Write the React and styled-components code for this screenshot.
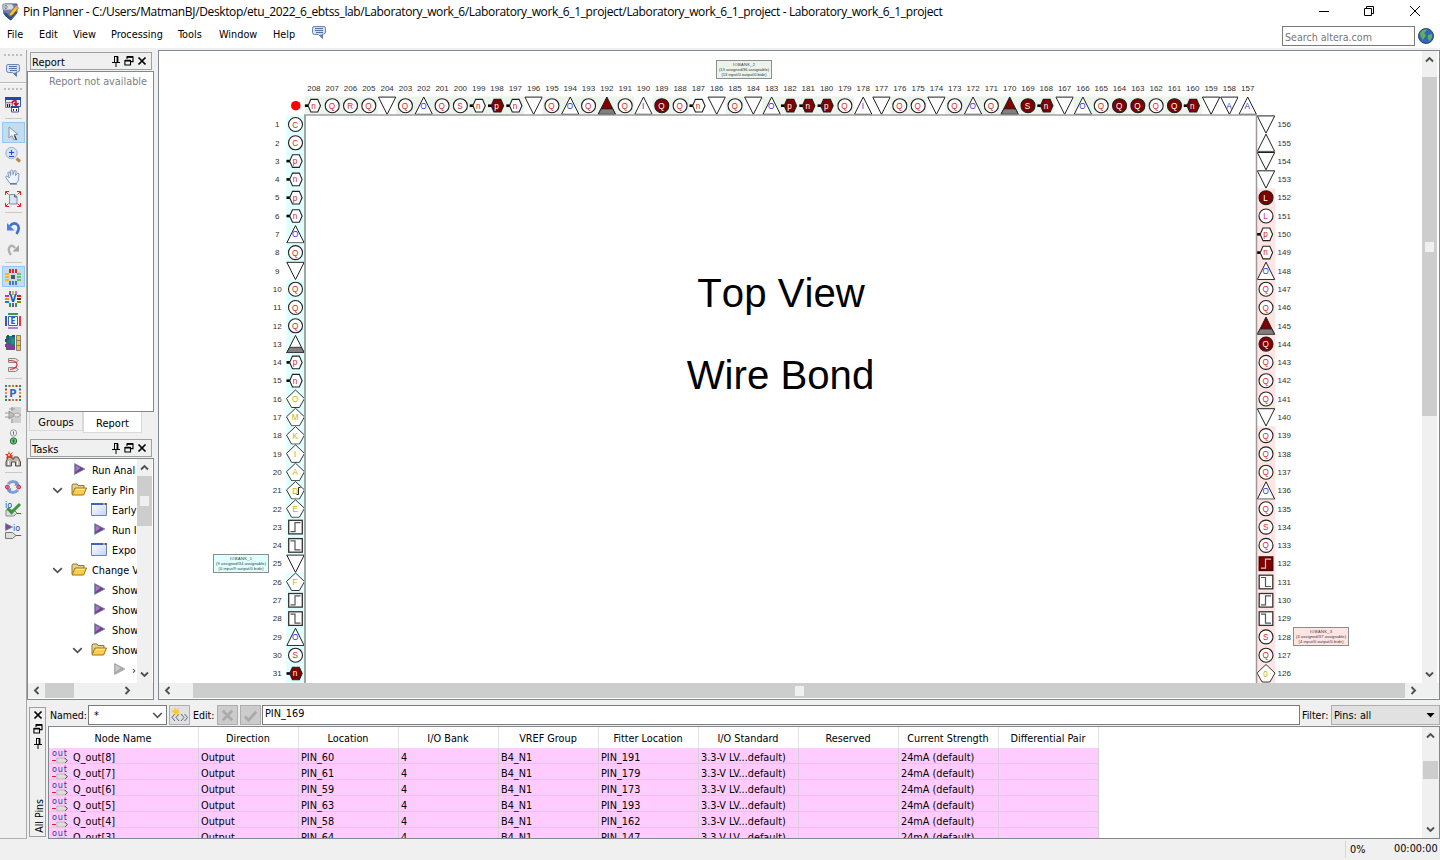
import React from "react";
import styled, { createGlobalStyle, css } from "styled-components";

const Global = createGlobalStyle`
  *{box-sizing:border-box}
  html,body{margin:0;padding:0;overflow:hidden}
  body{font-family:"DejaVu Sans Condensed","DejaVu Sans",sans-serif;font-stretch:condensed;font-size:10.8px;color:#000;background:#f0f0f0}
`;

/* ---------- window frame ---------- */
const Window = styled.div`width:1440px;height:860px;display:flex;flex-direction:column;background:#f0f0f0;overflow:hidden;`;
const TitleBar = styled.header`height:24px;flex:none;display:flex;align-items:center;background:#fff;padding-left:2px;`;
const TitleText = styled.div`font:12px/16px "Open Sans","Noto Sans",sans-serif;margin-left:4px;letter-spacing:-0.36px;white-space:nowrap;flex:1;`;
const WindowButtons = styled.div`display:flex;gap:30px;padding-right:17px;margin-top:-3px;`;
const MenuBar = styled.nav`height:26px;flex:none;display:flex;align-items:flex-start;background:linear-gradient(#fff 0 24px,#f0f0f0 24px);padding-left:7px;`;
const MenuItem = styled.div`width:${p => p.$w}px;line-height:22px;white-space:nowrap;`;
const MenuIcon = styled.div`padding-top:1px;line-height:0;`;
const SearchBox = styled.div`width:133px;height:20px;margin:2px 3px 0 auto;border:1px solid #7a7a7a;padding-left:2px;line-height:21px;color:#757575;font-size:10.6px;background:#fff;white-space:nowrap;`;
const GlobeSlot = styled.div`width:22px;padding:3px 0 0 0;`;
const Workspace = styled.main`height:788px;flex:none;display:flex;`;

/* ---------- left tool strip ---------- */
const ToolStrip = styled.aside`width:27px;height:789px;flex:none;display:flex;flex-direction:column;border-right:1px solid #a9a9a9;border-bottom:1px solid #b0b0b0;background:#f0f0f0;z-index:1;`;
const Grip = styled.div`height:10px;flex:none;margin-left:4px;width:18px;background:repeating-linear-gradient(90deg,#bdbdbd 0 2px,transparent 2px 4px) 0 4px/18px 2px no-repeat;`;
const StripLine = styled.div`height:2px;flex:none;background:#bcbcbc;border-bottom:1px solid #fafafa;`;
const StripSep = styled.div`height:6px;flex:none;margin:0 4px;background:linear-gradient(#c8c8c8,#c8c8c8) 1px 2px/17px 1px no-repeat;`;
const Tool = styled.div`
  height:21px;width:23px;margin:0 0 1px 2px;flex:none;padding:2px 0 0 2px;line-height:0;border:1px solid transparent;
  ${p => p.$on && css`background:#c2ddf2;border-color:#90c8f6;`}
`;

/* ---------- docks ---------- */
const Right = styled.div`flex:1;min-width:0;display:flex;flex-direction:column;`;
const Upper = styled.div`height:650px;flex:none;display:flex;`;
const Dock = styled.div`width:131px;flex:none;display:flex;flex-direction:column;`;
const DockHeader = styled.div`height:18px;width:122px;flex:none;margin:${p => p.$m};border:1px solid #a0a0a0;display:flex;align-items:center;padding:0 4px 0 1px;gap:3px;`;
const DockTitle = styled.div`flex:1;font-size:11px;line-height:18px;padding-top:3px;`;
const ReportBox = styled.div`height:341px;width:127px;flex:none;background:#fff;border:1px solid #828790;text-align:right;padding:2px 6px 0 0;color:#808080;line-height:16px;white-space:nowrap;`;
const Tabs = styled.div`display:flex;height:22px;flex:none;padding-left:2px;align-items:flex-start;`;
const Tab = styled.div`width:${p => p.$w}px;height:${p => p.$on ? 21 : 19}px;line-height:${p => p.$on ? 23 : 21}px;text-align:center;border:1px solid #d9d9d9;border-top:0;background:${p => p.$on ? "#fff" : "#f0f0f0"};font-size:11px;`;
const TaskBox = styled.div`height:242px;width:127px;flex:none;background:#fff;border:1px solid #828790;display:flex;flex-direction:column;`;
const TaskBody = styled.div`height:224px;flex:none;display:flex;`;
const TaskRows = styled.div`width:109px;flex:none;overflow:hidden;padding-top:1px;`;
const TaskRow = styled.div`height:20px;display:flex;align-items:center;padding-left:${p => p.$in}px;white-space:nowrap;`;
const Chevron = styled.div`width:20px;flex:none;padding-left:1px;line-height:0;`;
const TaskIcon = styled.div`width:${p => p.$w}px;flex:none;line-height:0;margin-top:-2px;`;
const TaskLabel = styled.span`line-height:18px;padding-top:2px;`;

/* ---------- scrollbars ---------- */
const VBar = styled.div`width:${p => p.$w || 15}px;flex:none;background:#f0f0f0;display:flex;flex-direction:column;align-items:center;height:100%;`;
const HBar = styled.div`height:15px;flex:none;background:#f0f0f0;display:flex;align-items:center;`;
const Arrow = styled.div`width:17px;height:17px;flex:none;display:flex;align-items:center;justify-content:center;`;
const Thumb = styled.div`flex:none;background:#cdcdcd;display:flex;align-items:center;justify-content:center;width:${p => p.$w}px;height:${p => p.$h}px;margin:${p => p.$m || 0};`;
const ThumbMark = styled.i`width:9px;height:10px;background:#f0f0f0;`;
const Fill = styled.div`flex:1;`;

/* ---------- package view ---------- */
const PackagePanel = styled.section`flex:1;min-width:0;height:650px;border:1px solid #828790;background:#fff;display:flex;flex-direction:column;`;
const PackageBody = styled.div`display:flex;height:632px;flex:none;`;
const PackageSvg = styled.svg`display:block;flex:none;background:#fff;`;
const PackageTitle = styled.text`font-size:40.2px;font-kerning:none;text-anchor:middle;`;

/* ---------- all pins ---------- */
const Lower = styled.section`height:139px;flex:none;display:flex;padding-top:5px;`;
const PinsHandle = styled.div`width:17px;height:130px;flex:none;margin:2px 2px 0 2px;border:1px solid #a0a0a0;display:flex;flex-direction:column;align-items:center;padding-top:2px;gap:4px;`;
const VerticalLabel = styled.div`writing-mode:vertical-rl;transform:rotate(180deg);margin-top:auto;margin-bottom:3px;margin-left:2px;line-height:14px;font-size:10.5px;white-space:nowrap;`;
const PinsMain = styled.div`flex:1;min-width:0;display:flex;flex-direction:column;`;
const FilterRow = styled.div`height:20px;flex:none;display:flex;align-items:center;`;
const FieldLabel = styled.div`width:${p => p.$w}px;padding-left:${p => p.$pl ?? 2}px;flex:none;font-size:10.5px;white-space:nowrap;`;
const Combo = styled.div`width:79px;height:20px;flex:none;border:1px solid #7a7a7a;background:#fff;display:flex;align-items:center;justify-content:space-between;padding:0 3px 0 5px;margin-right:2px;`;
const SmallButton = styled.div`width:21px;height:20px;flex:none;border:1px solid #adadad;background:${p => p.$off ? "#ccc" : "#e1e1e1"};display:flex;align-items:center;justify-content:center;margin-right:${p => p.$mr || 0}px;`;
const PinInput = styled.div`flex:1;height:20px;border:1px solid #7a7a7a;background:#fff;line-height:15px;padding-left:2px;`;
const FilterCombo = styled.div`width:109px;height:20px;flex:none;border:1px solid #adadad;background:#e1e1e1;display:flex;align-items:center;justify-content:space-between;padding:0 4px 0 2px;`;
const TableBox = styled.div`height:113px;margin-top:1px;flex:none;border:1px solid #828790;background:#fff;display:flex;`;
const TableView = styled.div`flex:1;overflow:hidden;`;
const HeadRow = styled.div`display:flex;height:21px;`;
const HeadCell = styled.div`width:${p => p.$w}px;height:21px;border-right:1px solid #e2e2e2;text-align:center;line-height:24px;white-space:nowrap;padding-right:1px;`;
const BodyRow = styled.div`display:flex;height:16px;`;
const BodyCell = styled.div`width:${p => p.$w}px;height:16px;border-right:1px solid #d8d0d8;border-bottom:1px solid #d8d0d8;background:#fcf;padding-left:2px;line-height:20px;white-space:nowrap;display:flex;`;
const NodeIcon = styled.span`width:22px;padding-left:1px;flex:none;line-height:0;`;
const StatusBar = styled.footer`height:22px;flex:none;display:flex;align-items:center;justify-content:flex-end;`;
const Percent = styled.div`width:49px;height:17px;border-left:1px solid #d7d7d7;padding-left:4px;line-height:18px;`;
const Clock = styled.div`width:46px;line-height:18px;white-space:nowrap;`;

/* ---------- small glyphs ---------- */
const Chev = ({ d = "down", c = "#505050", s = 9, w = 1.9 }) => {
  const r = { down: 0, up: 180, left: 90, right: -90 }[d];
  return <svg width={s} height={s} viewBox="0 0 9 9"><path d="M1 2.5 4.5 6 8 2.5" transform={`rotate(${r} 4.5 4.5)`} fill="none" stroke={c} strokeWidth={w} /></svg>;
};
const PinGlyph = () => <svg width="10" height="11" viewBox="0 0 10 11"><path d="M3 .5h4M3.500 .5v6M1 6.500h8M5 7v4" fill="none" stroke="#000" /><path d="M6.500 .5v6" stroke="#000" strokeWidth="1.800" /></svg>;
const FloatGlyph = () => <svg width="10" height="10" viewBox="0 0 10 10"><path d="M3 3V.9h6v4.7H7M.9 4.5h5.6V9H.9z" fill="none" stroke="#000" strokeWidth="1.1" /><path d="M3 .9h6M1 4.7h5.5" stroke="#000" strokeWidth="1.8" /></svg>;
const CloseGlyph = () => <svg width="10" height="10" viewBox="0 0 10 10"><path d="m1.5 1.5 7 7m0-7-7 7" stroke="#000" strokeWidth="1.7" /></svg>;
const Ico = ({ children, w = 16, h = 16, v = "0 0 16 16" }) => <svg width={w} height={h} viewBox={v}>{children}</svg>;
const ChatIcon = () => <Ico><path d="M3 1.500h10q1.500 0 1.500 2v3.500q0 2-2 2H11.500v4.500L7.500 9.500H3.500Q1.500 9.500 1.500 7.500V3.500q0-2 1.500-2z" fill="#d3e0f5" stroke="#6a87b4" /><path d="M4 3.500h8M4 5.500h8M5 7.500h7" stroke="#5573a0" /><path d="m8 10 3.500 3.500V9.500" fill="#5d7fae" /></Ico>;
const Play = ({ gray }) => <svg width="12" height="12" viewBox="0 0 12 12"><path d="M.5 11.500V.5L11 6z" fill={gray ? "#aaa" : "#6e3f91"} stroke={gray ? "#a5a5a5" : "#8296ac"} strokeWidth=".8" /><path d="M1.500 9V2l5 3z" fill={gray ? "#ccc" : "#a57abd"} /></svg>;
const Folder = () => <svg width="16" height="13" viewBox="0 0 16 13"><path d="M1 11V2l1-1h4l1 1.500h6V5" fill="#e4d493" stroke="#8a7638" /><path d="m1 12 3-7h11.500L12.600 12z" fill="#ffcc4d" stroke="#9a7020" /><path d="M5 6.300h8.800" stroke="#fff0a0" /></svg>;
const Sheet = () => <svg width="16" height="13" viewBox="0 0 16 13"><defs><linearGradient id="sheet" x1="0" y1="0" x2="1" y2="1"><stop offset="0" stopColor="#fff" /><stop offset="1" stopColor="#c3d1f5" /></linearGradient></defs><path d="M.5.5h15v12H.5z" fill="url(#sheet)" stroke="#6a83b5" /><path d="M0 1h16" stroke="#3768c8" strokeWidth="2" /><path d="M12 1h2" stroke="#f28a25" strokeWidth="2" /></svg>;
const OutIcon = () => <svg width="17" height="15" viewBox="0 0 17 15"><text x="0" y="8" fontSize="9" textLength="15" fill="#1b3f9c" fontFamily="DejaVu Sans,sans-serif">out</text><path d="M0 12.500h4" stroke="#e22" /><path d="M5 10h7l3.500 2.500L13 15H5z" fill="#ddd" stroke="#aaa" strokeWidth=".8" /><path d="m12.500 10 3 2.500-2.500 2.500" fill="none" stroke="#555" /></svg>;

const bars = (top, right, bottom, left) => <g shapeRendering="crispEdges">
  {[4, 7, 10].map((x, i) => <rect key={"t" + i} x={x} y="0" width="2" height="4" fill={top[i % top.length]} />)}
  {[4, 7, 10].map((x, i) => <rect key={"b" + i} x={x} y="12" width="2" height="4" fill={bottom[i % bottom.length]} />)}
  {[4, 7, 10].map((y, i) => <rect key={"l" + i} x="0" y={y} width="4" height="2" fill={left[i % left.length]} />)}
  {[4, 7, 10].map((y, i) => <rect key={"r" + i} x="12" y={y} width="4" height="2" fill={right[i % right.length]} />)}
</g>;
const letter = (t, c, s = 9, y = 11.3) => <text x="8" y={y} textAnchor="middle" fontSize={s} fontWeight="bold" fill={c} fontFamily="DejaVu Sans,sans-serif">{t}</text>;
const dots = ["#1f8f3a", "#d04a21", "#6aa81e", "#e02020", "#2a9b36"];
const dotsSide = ["#168c96", "#8a5a20", "#e39b1c", "#3658bd", "#1f8f3a"];

const toolIcons = {
  windows: <Ico><path d="M.5.5h15v9H.5z" fill="#e9eef8" stroke="#2f55a8" /><path d="M0 1.500h16" stroke="#1f4ba8" strokeWidth="3" /><path d="M.5 5.500h7v5h-7z" fill="#ccc" stroke="#888" /><path d="M6.500 9.500h7v5.500h-7z" fill="#fff" stroke="#44579b" /><path d="M6 10h8" stroke="#234a9d" strokeWidth="2" /><path d="M2.500 7v3m2-3v3M8.500 12v2m3-2v2" stroke="#222" /><path d="M7 6q1-3 4-2v3m-2-1 2 2.500L13.500 6" fill="none" stroke="#c2003c" strokeWidth="1.500" /></Ico>,
  pointer: <Ico><path d="M4 2v11l3-2.500 2 4.500 2-1-2-4.500h4z" fill="#f4f8fe" stroke="#8292a8" /><path d="m9.500 10.500 2 4.500" stroke="#27364c" strokeWidth="1.200" /></Ico>,
  zoom: <Ico><circle cx="6.500" cy="6" r="5.700" fill="#cfe2fa" stroke="#9fb2c4" /><path d="m11.500 11.500 3.500 3" stroke="#bc8345" strokeWidth="3" /><path d="M4 5.500h5M6.500 3v5M4 9.500h5" stroke="#2250b5" strokeWidth="1.100" /></Ico>,
  hand: <Ico><path d="M5 14.500 .8 8.500q-.3-2 1.500-1.500l2 2-1.500-5q.3-1.700 1.800-.7l1 3.200V1.700q1.200-1.700 2.200 0l.2 4 1.200-3.900q1.900-1 1.900.8l-.6 4 1.900-2.300q2-.3 1.500 1.600L13.200 12l-2 2.500z" fill="#edf3ff" stroke="#7f98bd" /><path d="M5 15h7" stroke="#435f8c" /></Ico>,
  fit: <Ico><path d="M4.500 3.500h5l2.500 2v7.500H4.500z" fill="#dbe4f1" stroke="#7f90a8" /><path d="M9.500 3.500V6H12" fill="#8fa0b8" stroke="#526784" /><path d="M.5 4V.5H4M12 .5h3.500V4M.5 12v3.500H4m8 0h3.500V12M1 1l2.500 2.500M15 1l-2.500 2.500M1 15l2.500-2.500m11.500 2.500-2.500-2.500" fill="none" stroke="#e42020" /></Ico>,
  undo: <Ico><path d="M5 7q3-4 6.500-2 4.500 3 0 10" fill="none" stroke="#3b71d5" strokeWidth="2.600" /><path d="M2 4v7.500h7.500z" fill="#4a80df" /></Ico>,
  redo: <Ico><path d="M10 7Q7.500 3.500 5 5.500q-3 3.500 1 8.500" fill="none" stroke="#b0b0b0" strokeWidth="2.400" /><path d="M14 4v6.500H7.500z" fill="#a5a5a5" /></Ico>,
  chip: <Ico>{bars(["#ed2424"], ["#6cc25f"], ["#477ac6"], ["#ffb516"])}<path d="M6 6h4v4H6z" fill="#555" /></Ico>,
  vref: <Ico>{bars(["#8c57b3", "#a1d32d", "#dd6dd6"], ["#e02020", "#702020", "#7c8a10"], ["#1ca72a", "#7e4aaa", "#3a8f55"], ["#c52dbd", "#f28c15", "#1480b0"])}<path d="M4 4h8v8H4z" fill="#f0f0f0" />{letter("V", "#2454b5", 10)}</Ico>,
  edge: <Ico><path d="M3 1h10" stroke="#3d9a4a" strokeWidth="2" /><path d="M3 15h10" stroke="#b47fd0" strokeWidth="2" /><path d="M1 3v10" stroke="#3658bd" strokeWidth="2" /><path d="M15 3v10" stroke="#e23a3a" strokeWidth="2" /><path d="M3.500 3.500h9v9h-9z" fill="#fff" stroke="#3365be" />{letter("E", "#245bbb", 8, 11)}</Ico>,
  regions: <Ico><path d="M1 1h9v14H1z" fill="#23805c" /><path d="M2 0h2v5H2zM7 0h3v2H7zM0 4h2v3H0z" fill="#234b99" /><path d="M0 9h3V8h4v2h3v4H7v1H2v-3H0z" fill="#803c9c" /><path d="M6 4h3v5H6z" fill="#2388bb" /><path d="M11.500.500h4v15h-4zm0 5h4m-4 5h4" fill="#ffc528" stroke="#6a6a70" strokeWidth=".8" /></Ico>,
  diff: <Ico><path d="M3.500 1.500h7l3 2-3 2h-7zM3.500 10.500h7l3 2-3 2h-7z" fill="#e4e4e4" stroke="#8a8a8a" /><path d="M4 3.500q8 0 8 4t-7 5" fill="none" stroke="#e03030" strokeWidth="1.200" /></Ico>,
  pin: <Ico>{[0, 3.5, 7, 10.500, 14].map((p, i) => <g key={i}><rect x={p} y="0" width="2" height="2" fill={dots[i]} /><rect x={p} y="14" width="2" height="2" fill={dots[4 - i]} /><rect x="0" y={p} width="2" height="2" fill={dotsSide[i]} /><rect x="14" y={p} width="2" height="2" fill={dotsSide[4 - i]} /></g>)}{letter("P", "#3765be", 11, 12)}</Ico>,
  gate: <Ico><path d="M6 0h10v16H6z" fill="#d0d0d0" /><path d="M0 6h5M0 10h5m-1-6 6 4-6 4zM10 8h6M7 0v4m0 8v4m-3-14h6" fill="#bbb" stroke="#999" /><ellipse cx="12" cy="8" rx="3" ry="2" fill="#e4e4e4" stroke="#aaa" /></Ico>,
  lights: <Ico><circle cx="8.500" cy="4" r="3.200" fill="#eee" stroke="#999" /><circle cx="8.500" cy="12" r="3.200" fill="#7bc86c" stroke="#24712b" /><path d="M8.500 2.500v3" stroke="#666" /><path d="M8.500 10.500v3" stroke="#234a9d" strokeWidth="1.600" /></Ico>,
  find: <Ico><path d="M3 6h4v2h2V6h4l2.500 5v4h-5v-4h-4v4H1v-4z" fill="#c0b8ae" stroke="#4e4944" /><path d="M3.500 10v4m9-4v4" stroke="#fff" /><path d="m4 0 1 3 3-2-2 3 3 1-3 1 1 2-3-2-3 2 1-3-2-2 3 0z" fill="#e92a28" /><circle cx="4" cy="4" r="1.200" fill="#ffd334" /></Ico>,
  refresh: <Ico><path d="M3 5q5-5 10 0M3 11q5 5 10 0" fill="none" stroke="#7fa0d6" strokeWidth="3" /><path d="M11 1.500l3.500 4.500-5 1zM5 14.500 1.500 10l5-1z" fill="#7195cf" /><circle cx="2.300" cy="8" r="1.900" fill="#fff" stroke="#c32456" /><circle cx="13.700" cy="8" r="1.900" fill="#fff" stroke="#c32456" /><path d="M0 8h4.500m7 0H16M2.300 6v4m11.400-4v4" stroke="#c32456" strokeWidth=".8" /></Ico>,
  ioCheck: <Ico><text x="0" y="7" fontSize="9" fill="#174eae" fontFamily="DejaVu Sans,sans-serif">io</text><path d="M1 9h8l3 3-3 3H1z" fill="#ddd" stroke="#888" /><path d="M12 12.500h4" stroke="#e22" /><path d="m2.500 7 4 4.500L15 3" fill="none" stroke="#3e9440" strokeWidth="3" /></Ico>,
  ioRun: <Ico><path d="M.5.500v7l7-3.500z" fill="#7a4a9c" stroke="#69819b" strokeWidth=".7" /><text x="8" y="7.500" fontSize="9" fill="#174eae" fontFamily="DejaVu Sans,sans-serif">io</text><path d="M.5 9.500h7l3.500 3-3.500 3h-7z" fill="#ddd" stroke="#777" /><path d="M11 12.500h5" stroke="#e22" /></Ico>,
};
const groups = [
  ["windows"], ["pointer", "zoom", "hand", "fit"], ["undo", "redo"],
  ["chip", "vref", "edge", "regions", "diff"], ["pin", "gate", "lights", "find"], ["refresh", "ioCheck", "ioRun"],
];
const active = ["pointer", "chip"];

/* ---------- pins of the package ----------
   shape: c circle, h hexagon, v down triangle, a up triangle, g up triangle with grey base,
   d pentagon, r rising clock, f falling clock; "!" = assigned, "-" = outside any bank */
const TOP = "hn cQ cR cQ v- cQ aO cQ cS hn hp! hn v- cQ aO cQ g! cQ aI- cQ! cQ hn- v- cQ v- aO hp! hn! hp! cQ aI- v- cQ cQ v- cQ aO cQ g! cS! hn! v- aO cQ cQ! cQ! cQ cQ! hn! v- vA- aA-".split(" ");
const LEFT = "cC cC hp hn hp hn aO cQ v- cQ cQ cQ g hp hn dO dM dK dI dA dD dE r f v- dF r f aO cS hn!".split(" ");
const RIGHT = "v- a- v- v- cL! cL hp hn aO cQ cQ g! cQ! cQ cQ cQ v- cQ cQ cQ aO cQ cS cQ r! f r f cS cQ d0".split(" ");
const STEP = 18.3;

const Pin = ({ spec, x, y, tint }) => {
  const s = spec[0], on = spec.includes("!"), off = spec.includes("-");
  const ch = (spec.slice(1).match(/[A-Za-z0]/) || [""])[0];
  const fill = on ? "#800000" : "#fff", st = "#202020";
  const color = on ? "#fff" : s === "a" || s === "v" ? "#3333e0" : s === "d" ? "#c8b400" : ch === "L" ? "#d030a0" : "#d52b1e";
  return (
    <g transform={`translate(${x} ${y})`}>
      <rect x="-9.300" y="-9.300" width="18.600" height="18.600" fill={off ? "#fff" : tint} />
      {s === "c" && <circle r="7" fill={fill} stroke={st} strokeWidth="1.100" />}
      {s === "h" && <><path d="M-9 0h3.500" stroke="#000" strokeWidth="2.600" /><path d="M-5.800 0-3-6.300H3.800L6.600 0 3.800 6.300H-3z" fill={fill} stroke={st} strokeWidth="1.100" /></>}
      {s === "v" && <path d="M-8.700-8.600H8.700L0 8.700z" fill="#fff" stroke={st} />}
      {s === "a" && <path d="M-8.700 8.600H8.700L0-8.700z" fill="#fff" stroke={st} />}
      {s === "g" && <><path d="M-8.700 8.600H8.700L0-8.700z" fill={fill} stroke={st} /><path d="M-5.800 3.200H5.800L8.700 8.600H-8.700z" fill="#808080" stroke={st} strokeWidth=".8" /></>}
      {s === "d" && <path d="M0-9 9-.5 3.900 8.500H-3.900L-9-.5z" fill="#fff" stroke={st} strokeWidth=".9" />}
      {(s === "r" || s === "f") && <><rect x="-6.800" y="-6.800" width="13.600" height="13.600" fill={fill} stroke={on ? "#400" : "#333"} strokeWidth="1.300" /><path d={s === "r" ? "M-5 4.500H-.5V-4.500H5" : "M-5-4.500H-.5V4.500H5"} fill="none" stroke={on ? "#dcc" : "#555"} strokeWidth="1.200" /></>}
      {ch && <text x="-.4" y={s === "h" ? 2.800 : 3} textAnchor="middle" fontSize="8.200" fill={color}>{ch}</text>}
      {ch === "D" && <path d="M1 4h2V-3h2" fill="none" stroke="#222" />}
    </g>
  );
};
const Bank = ({ x, y, tint, lines }) => (
  <g>
    <rect x={x} y={y} width="55" height="18" fill={tint} stroke="#8c8c8c" />
    {lines.map((t, i) => <text key={t} x={x + 27.500} y={y + 5.800 + i * 5} textAnchor="middle" fontSize="4" textLength={[22, 50, 45][i]} fill="#333">{t}</text>)}
  </g>
);
const GREEN = "#ebf3eb", CYAN = "#e0ffff", PINK = "#ffe4e4";

const PackageView = () => (
  <PackageSvg width="1263" height="632" viewBox="159 51 1263 632" fontFamily="Liberation Sans, Arial, sans-serif">
    {TOP.map((s, i) => <Pin key={i} spec={s} x={313.900 + i * 18.310} y={105.700} tint={GREEN} />)}
    {LEFT.map((s, i) => <Pin key={i} spec={s} x={295.500} y={124.500 + i * STEP} tint={CYAN} />)}
    {RIGHT.map((s, i) => <Pin key={i} spec={s} x={1266} y={124.500 + i * STEP} tint={PINK} />)}
    <path d="M305.500 683V115H1256.500V683" fill="#fff" />
    <path d="M305 683V115" stroke="#9aa8a8" strokeWidth="2" />
    <path d="M304 115H1257" stroke="#a0a0a0" strokeWidth="1.500" />
    <path d="M1256.500 115V683" stroke="#a09898" strokeWidth="1.500" />
    <circle cx="295.800" cy="105.700" r="4.800" fill="#f00" />
    <g fontSize="8" fill="#303030">
      {TOP.map((_, i) => <text key={i} x={313.900 + i * 18.310} y="91" textAnchor="middle">{208 - i}</text>)}
      {LEFT.map((_, i) => <text key={i} x={277.200} y={127.200 + i * STEP} textAnchor="middle">{i + 1}</text>)}
      {RIGHT.map((_, i) => <text key={i} x={1277.500} y={127.200 + i * STEP}>{156 - i}</text>)}
    </g>
    <PackageTitle x="781" y="307">Top View</PackageTitle>
    <PackageTitle x="780.5" y="389">Wire Bond</PackageTitle>
    <Bank x={716.500} y={60.500} tint={GREEN} lines={["IOBANK_2", "(13 assigned/36 assignable)", "(13 input/0 output/0 bidir)"]} />
    <Bank x={213.500} y={554.500} tint={CYAN} lines={["IOBANK_1", "(9 assigned/34 assignable)", "(0 input/9 output/0 bidir)"]} />
    <Bank x={1293.500} y={627.500} tint={PINK} lines={["IOBANK_3", "(4 assigned/37 assignable)", "(4 input/0 output/0 bidir)"]} />
  </PackageSvg>
);

const menus = [["File", 32], ["Edit", 34], ["View", 38], ["Processing", 67], ["Tools", 41], ["Window", 54], ["Help", 38]];
const tasks = [
  { in: 46, icon: "play", text: "Run Anal" },
  { in: 23, open: true, icon: "folder", text: "Early Pin" },
  { in: 63, icon: "sheet", text: "Early" },
  { in: 66, icon: "play", text: "Run I" },
  { in: 63, icon: "sheet", text: "Expo" },
  { in: 23, open: true, icon: "folder", text: "Change V" },
  { in: 66, icon: "play", text: "Show" },
  { in: 66, icon: "play", text: "Show" },
  { in: 66, icon: "play", text: "Show" },
  { in: 43, open: true, icon: "folder", text: "Show" },
  { in: 86, icon: "gray", text: "›" },
];
const taskIcons = { play: <Play />, gray: <Play gray />, folder: <Folder />, sheet: <Sheet /> };
const columns = [["Node Name", 150], ["Direction", 100], ["Location", 100], ["I/O Bank", 100], ["VREF Group", 100], ["Fitter Location", 100], ["I/O Standard", 100], ["Reserved", 100], ["Current Strength", 100], ["Differential Pair", 100]];
const nodes = [[8, 60, 191], [7, 61, 179], [6, 59, 173], [5, 63, 193], [4, 58, 162], [3, 64, 147]];

const Header = ({ title, m }) => <DockHeader $m={m}><DockTitle>{title}</DockTitle><PinGlyph /><FloatGlyph /><CloseGlyph /></DockHeader>;

export default function App() {
  return (
    <Window>
      <Global />
      <TitleBar>
        <svg width="17" height="18" viewBox="0 0 17 18"><path d="m1 2 3-1h11v9l-6 7-7-6z" fill="#5f82bd" stroke="#3a5588" /><path d="m3 10 6 5 5-6M3 12l6 5" fill="none" stroke="#2e436c" strokeWidth="1.200" /><path d="M1 1h9l2 3-2 3H1z" fill="#dedede" stroke="#8a95a5" /><path d="M3 2.500v3h1.500q1.500-1.500 0-3z" fill="none" stroke="#567" strokeWidth=".7" /><path d="m8 10 6-7 2.500 2-6 7-3.500 1z" fill="#ffc52d" stroke="#a56b18" strokeWidth=".7" /><path d="m14 3 2 2" stroke="#e88c8c" strokeWidth="2" /></svg>
        <TitleText>Pin Planner - C:/Users/MatmanBJ/Desktop/etu_2022_6_ebtss_lab/Laboratory_work_6/Laboratory_work_6_1_project/Laboratory_work_6_1_project - Laboratory_work_6_1_project</TitleText>
        <WindowButtons>
          <svg width="16" height="12" viewBox="0 0 16 12"><path d="M2 6.500h10" stroke="#000" /></svg>
          <svg width="14" height="12" viewBox="0 0 14 12"><path d="M3.500 3V1.500h7v7H9M1.500 3.500h7v7h-7z" fill="none" stroke="#000" /></svg>
          <svg width="16" height="12" viewBox="0 0 16 12"><path d="m3 1 10 10M13 1 3 11" stroke="#000" /></svg>
        </WindowButtons>
      </TitleBar>
      <MenuBar>
        {menus.map(([t, w]) => <MenuItem key={t} $w={w}>{t}</MenuItem>)}
        <MenuIcon><ChatIcon /></MenuIcon>
        <SearchBox>Search altera.com</SearchBox>
        <GlobeSlot><svg width="18" height="18" viewBox="0 0 18 18"><circle cx="8" cy="9" r="7.500" fill="#2f66b5" stroke="#254a7c" /><path d="M2 6q3-4 7-4-1 3-3 4 3 2 1 4l-2 3q-3-3-3-7zM10 8l4-1q1 4-3 7-2-3-1-6z" fill="#65ad5d" /></svg></GlobeSlot>
      </MenuBar>
      <Workspace>
        <ToolStrip>
          <Grip />
          <Tool><ChatIcon /></Tool>
          <StripLine />
          <Grip />
          {groups.map((g, i) => (
            <React.Fragment key={i}>
              {i > 0 && <StripSep />}
              {g.map(n => <Tool key={n} $on={active.includes(n)}>{toolIcons[n]}</Tool>)}
            </React.Fragment>
          ))}
        </ToolStrip>
        <Right>
          <Upper>
            <Dock>
              <Header title="Report" m="2px 0 1px 3px" />
              <ReportBox>Report not available</ReportBox>
              <Tabs><Tab $w={54}>Groups</Tab><Tab $w={59} $on>Report</Tab></Tabs>
              <Header title="Tasks" m="5px 0 1px 3px" />
              <TaskBox>
                <TaskBody>
                  <TaskRows>
                    {tasks.map((t, i) => (
                      <TaskRow key={i} $in={t.in}>
                        {t.open && <Chevron><Chev s={11} w={1.4} /></Chevron>}
                        <TaskIcon $w={t.icon === "play" || t.icon === "gray" ? 18 : 21}>{taskIcons[t.icon]}</TaskIcon>
                        <TaskLabel>{t.text}</TaskLabel>
                      </TaskRow>
                    ))}
                  </TaskRows>
                  <VBar><Arrow><Chev d="up" /></Arrow><Thumb $w={15} $h={50}><ThumbMark /></Thumb><Fill /><Arrow><Chev /></Arrow></VBar>
                </TaskBody>
                <HBar><Arrow><Chev d="left" /></Arrow><Thumb $w={29} $h={15} /><Fill /><Arrow><Chev d="right" /></Arrow><Arrow /></HBar>
              </TaskBox>
            </Dock>
            <PackagePanel>
              <PackageBody>
                <PackageView />
                <VBar><Arrow><Chev d="up" /></Arrow><Thumb $w={15} $h={339} $m="9px 0 0"><ThumbMark /></Thumb><Fill /><Arrow><Chev /></Arrow></VBar>
              </PackageBody>
              <HBar><Arrow><Chev d="left" /></Arrow><Thumb $w={1212} $h={15} $m="0 0 0 17px"><ThumbMark /></Thumb><Arrow><Chev d="right" /></Arrow></HBar>
            </PackagePanel>
          </Upper>
          <Lower>
            <PinsHandle><CloseGlyph /><FloatGlyph /><PinGlyph /><VerticalLabel>All Pins</VerticalLabel></PinsHandle>
            <PinsMain>
              <FilterRow>
                <FieldLabel $w={40}>Named:</FieldLabel>
                <Combo>*<Chev w={1.300} s={11} /></Combo>
                <SmallButton $mr={2}><svg width="17" height="17" viewBox="0 0 17 17"><path d="m4 7-3 3.500L4 14m4-7-3 3.500L8 14M10 7l3 3.500-3 3.500m3.500-7 3 3.500-3 3.500" fill="none" stroke="#55657f" /><path d="m4 0 1 3 3-2-1 3 3 1-3 1 1 3-3-2-3 1 1-2-3-2 3-1z" fill="#ffc82c" /></svg></SmallButton>
                <FieldLabel $w={25} $pl={1}>Edit:</FieldLabel>
                <SmallButton $off $mr={2}><Ico w={15} h={15}><path d="m3 3 10 10m0-10L3 13" stroke="#aaa" strokeWidth="3" /></Ico></SmallButton>
                <SmallButton $off $mr={1}><Ico w={15} h={15}><path d="m2 9 4 4L14 4" fill="none" stroke="#aaa" strokeWidth="3" /></Ico></SmallButton>
                <PinInput>PIN_169</PinInput>
                <FieldLabel $w={31}>Filter:</FieldLabel>
                <FilterCombo>Pins: all<svg width="9" height="5" viewBox="0 0 9 5"><path d="M.5 0h8l-4 4.500z" /></svg></FilterCombo>
              </FilterRow>
              <TableBox>
                <TableView>
                  <HeadRow>{columns.map(([t, w]) => <HeadCell key={t} $w={w}>{t}</HeadCell>)}</HeadRow>
                  {nodes.map(([n, loc, fit]) => {
                    const cells = [null, "Output", `PIN_${loc}`, "4", "B4_N1", `PIN_${fit}`, "3.3-V LV...default)", "", "24mA (default)", ""];
                    return (
                      <BodyRow key={n}>
                        {columns.map(([t, w], i) => <BodyCell key={t} $w={w}>{i === 0 ? <><NodeIcon><OutIcon /></NodeIcon>{`Q_out[${n}]`}</> : cells[i]}</BodyCell>)}
                      </BodyRow>
                    );
                  })}
                </TableView>
                <VBar $w={17}><Arrow><Chev d="up" /></Arrow><Thumb $w={15} $h={18} $m="17px 0 0" /><Fill /><Arrow><Chev /></Arrow></VBar>
              </TableBox>
            </PinsMain>
          </Lower>
        </Right>
      </Workspace>
      <StatusBar><Percent>0%</Percent><Clock>00:00:00</Clock></StatusBar>
    </Window>
  );
}
